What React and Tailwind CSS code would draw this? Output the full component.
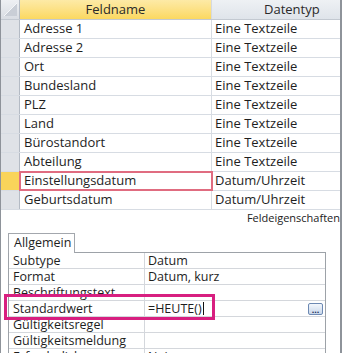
import React from 'react';

const fields = [
  ['Adresse 1', 'Eine Textzeile'],
  ['Adresse 2', 'Eine Textzeile'],
  ['Ort', 'Eine Textzeile'],
  ['Bundesland', 'Eine Textzeile'],
  ['PLZ', 'Eine Textzeile'],
  ['Land', 'Eine Textzeile'],
  ['Bürostandort', 'Eine Textzeile'],
  ['Abteilung', 'Eine Textzeile'],
  ['Einstellungsdatum', 'Datum/Uhrzeit'],
  ['Geburtsdatum', 'Datum/Uhrzeit'],
];

const props = [
  ['Subtype', 'Datum'],
  ['Format', 'Datum, kurz'],
  ['Beschriftungstext', ''],
  ['Standardwert', '=HEUTE()'],
  ['Gültigkeitsregel', ''],
  ['Gültigkeitsmeldung', ''],
  ['Erforderlich', 'Nein'],
];

export default function App() {
  return (
    <div
      className="relative w-[342px] h-[353px] overflow-hidden bg-white border-l border-r-2 border-[#8e939a] text-[#1e1e1e]"
      style={{ fontFamily: '"Open Sans", "Noto Sans", sans-serif' }}
    >
      {/* field grid */}
      <div className="flex h-[20px] border-b border-[#c3c9d1]">
        <div className="w-[19px] shrink-0 bg-gradient-to-b from-[#eef0f3] to-[#d9dde3] border-r border-[#b4bbc5] relative">
          <svg className="absolute left-[3px] top-[3px]" width="13" height="13" viewBox="0 0 13 13">
            <path d="M13 0 L13 13 L0 13 Z" fill="#c9ced6" />
            <path d="M13 0 L0 13" stroke="#f4f6f8" strokeWidth="1" />
          </svg>
        </div>
        <div className="w-[192px] shrink-0 bg-gradient-to-b from-[#fdeaa6] to-[#fbd85f] flex items-center justify-center text-[13px] text-[#2a2a2a] border-r border-[#d5d9df]">
          Feldname
        </div>
        <div className="flex-1 bg-gradient-to-b from-[#eef1f4] to-[#dfe4ea] flex items-center pl-[52px] text-[13px] text-[#2a2a2a]">
          Datentyp
        </div>
      </div>
      {fields.map(([name, type], i) => {
        const active = i === 8;
        return (
          <div key={name} className="flex h-[19px] border-b border-[#d7dce3]">
            <div
              className={
                'w-[19px] shrink-0 border-r border-[#b4bbc5] ' +
                (active ? 'bg-[#f9d45a]' : 'bg-[#dfe2e7]')
              }
            />
            <div
              className={
                'w-[192px] shrink-0 flex items-center pl-[4px] text-[13px] border-r border-[#d7dce3] ' +
                (active ? 'outline-2 outline-[#e06c80] -outline-offset-1' : '')
              }
            >
              {name}
            </div>
            <div className="flex-1 flex items-center pl-[3px] text-[13px] whitespace-nowrap">{type}</div>
          </div>
        );
      })}

      {/* lower pane */}
      <div className="flex justify-end h-[22px] pt-[1px] text-[11px] leading-[14px] text-[#222]">
        Feldeigenschaften
      </div>
      <div className="pl-[7px] pt-[1px]">
        <div className="w-[67px] h-[20px] border border-b-0 border-[#a3a7ad] flex items-center pl-[5px] text-[12.5px] whitespace-nowrap bg-white relative z-10 -mb-px">
          Allgemein
        </div>
        <div className="w-[318px] border border-[#9da2a8] bg-white">
          {props.map(([label, value]) => (
            <div key={label} className="flex h-[16px] border-b border-[#d4d7dc]">
              <div className="w-[136px] shrink-0 border-r border-[#d4d7dc] flex items-center pl-[4px] text-[12.5px] leading-[16px] whitespace-nowrap">
                {label}
              </div>
              <div className="flex-1 flex items-center pl-[3px] text-[12.5px] leading-[16px]">
                {value}
                {label === 'Standardwert' && (
                  <>
                    <span className="inline-block w-px h-[13px] bg-[#111] ml-[1px]" />
                    <span className="ml-auto mr-[2px] w-[15px] h-[12px] rounded-[2px] border border-[#6d89b3] bg-gradient-to-b from-[#f3f7fc] to-[#c9d7ea] flex items-end justify-center text-[9px] leading-[9px] font-bold text-[#1d2f57]">
                      ...
                    </span>
                  </>
                )}
              </div>
            </div>
          ))}
        </div>
      </div>

      {/* highlight */}
      <div className="absolute left-[3px] top-[294px] w-[211px] h-[26px] border-[3px] border-[#d81f80] pointer-events-none" />
    </div>
  );
}
